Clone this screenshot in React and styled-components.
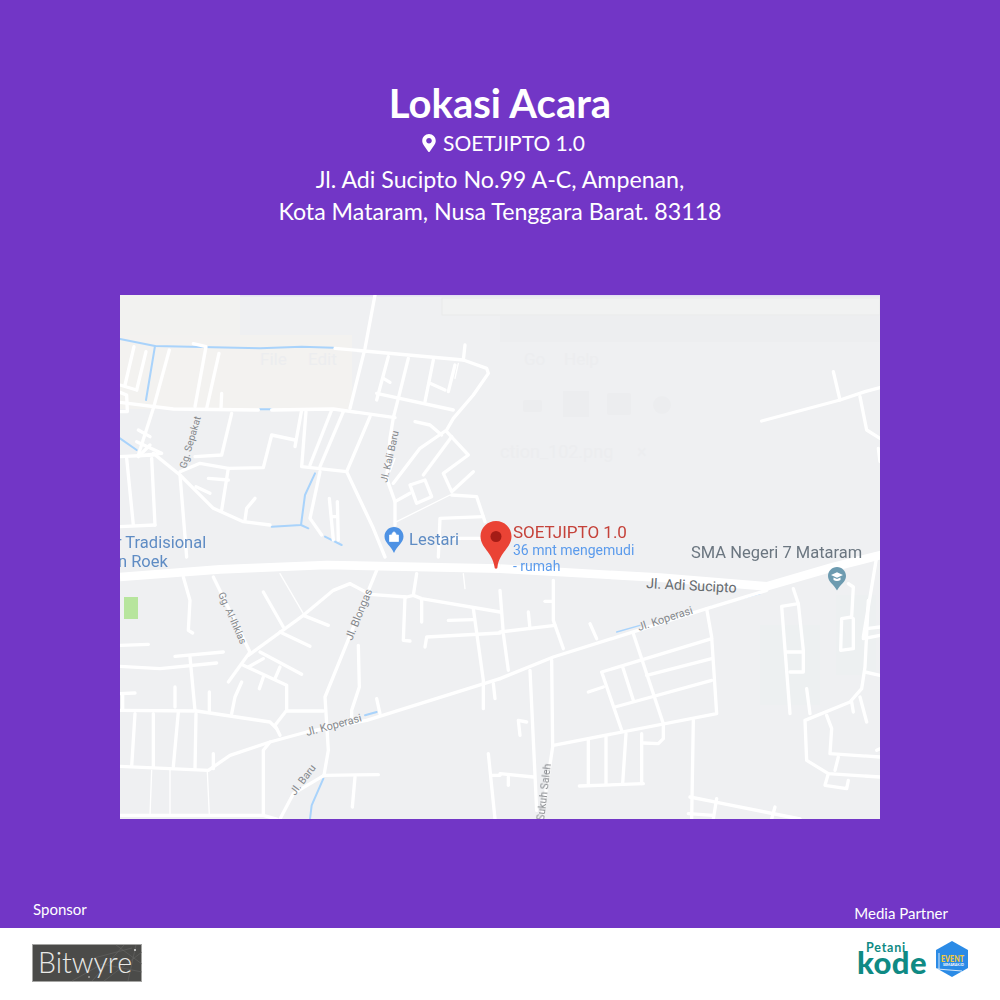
import React from 'react'
import styled, { createGlobalStyle } from 'styled-components'
import { FaMapMarkerAlt } from 'react-icons/fa'

const GlobalStyle = createGlobalStyle`
	* {
		box-sizing: border-box;
	}
	html, body {
		margin: 0;
		padding: 0;
		background: #7236c6;
	}
	body {
		font-family: Lato, "Open Sans", sans-serif;
	}
`

const Page = styled.div`
	width: 1000px;
	height: 1000px;
	background: #7236c6;
	color: #fff;
	display: flex;
	flex-direction: column;
	overflow: hidden;
`
const Hero = styled.header`
	padding-top: 80px;
	text-align: center;
`
const Title = styled.h1`
	margin: 0;
	font-size: 40px;
	line-height: 46px;
	font-weight: 700;
`
const Venue = styled.div`
	display: flex;
	justify-content: center;
	align-items: center;
	gap: 7px;
	margin-top: 3px;
	padding-left: 7px;
	font-size: 21px;
	line-height: 28px;
	svg {
		width: 14px;
		height: 18px;
	}
`
const Address = styled.p`
	margin: 6px 0 0;
	font-size: 23.2px;
	line-height: 32px;
`
const MapFrame = styled.div`
	width: 760px;
	height: 524px;
	margin: 68px auto 0;
	background: #eff0f2;
	overflow: hidden;
	svg {
		display: block;
	}
`
const FooterLabels = styled.div`
	display: flex;
	justify-content: space-between;
	align-items: flex-start;
	margin-top: auto;
	padding: 0 52px 0 33px;
	font-size: 15px;
	line-height: 18px;
	height: 28px;
`
const MediaLabel = styled.span`
	margin-top: 4px;
`
const SponsorBand = styled.footer`
	height: 72px;
	background: #fff;
	display: flex;
	justify-content: space-between;
	align-items: flex-start;
	padding: 16px 32px 0 32px;
`
const PartnerLogos = styled.div`
	display: flex;
	align-items: flex-start;
	gap: 7px;
	margin-top: -3px;
`

// traced from the map, in 3x crop coordinates per quadrant
const q1Roads = [
	'765,0 735,160 690,340', '645,160 1030,195 1100,220 1105,235 1060,300 1000,370 980,405 900,460 820,565',
	'1035,150 1030,195', '220,146 258,155 225,335', '297,175 260,340', '305,295 303,340',
	'0,322 160,342 415,345', '455,345 640,342 825,368', '148,165 100,340 55,480', '42,155 15,270', '78,170 50,285',
	'0,270 50,285', '0,292 20,300 22,350 0,350', '55,405 90,425', '335,355 305,480 225,485',
	'525,435 455,420 430,518 325,520 240,505 180,530', '545,345 525,455', '558,350 545,515 680,530',
	'635,345 570,510', '670,350 600,515', '750,365 680,530 760,700 795,786', '600,530 570,670 605,720',
	'50,440 125,475 60,482', '90,450 55,485', '0,485 100,480', '100,475 180,540 280,640 370,680 450,690',
	'180,540 200,786', '20,490 40,690', '95,490 105,690', '0,695 105,690', '325,520 305,645', '265,550 325,555',
	'228,575 270,595', '375,675 380,640 405,610', '628,610 640,735', '652,620 655,735', '635,665 650,665',
	'865,190 835,310 820,368 810,430 800,550 825,620 825,690', '805,185 770,315', '770,295 1000,345', '790,250 810,262',
	'940,195 915,320', '930,265 975,285', '1005,210 985,290', '885,380 930,390 965,420',
	'980,410 1045,480 970,535 995,590 1060,530', '995,425 910,540', '870,570 915,555 935,605 890,625 870,570',
	'825,620 870,595', '995,600 1070,605 1095,680', '1090,665 960,670 955,786', '960,730 1090,730'
]
const q1Thin = ['830,680 990,600', '810,530 825,490', '1005,250 1015,205']
const q1Water = [
	'0,132 105,153 420,160 545,155 640,158', '105,153 78,315', '420,343 455,343', '0,430 50,465',
	'585,535 555,600 543,690 455,695', '543,690 565,700', '615,725 665,750'
]
const q2Roads = ['785,378 1020,315 1095,290 1140,278', '1000,230 1020,315', '1080,305 1100,405 1140,430', '1135,460 1140,500']
const q3Roads = [
	'190,60 210,130 205,220 218,228', '280,60 390,285 325,375', '430,105 490,210',
	'690,80 640,100 550,175 385,295', '550,175 625,205', '480,225 570,268', '420,285 545,352',
	'370,325 500,385 500,460 465,505 480,535', '430,305 385,330', '480,330 465,365', '430,360 418,395',
	'365,375 345,420 335,470', '0,265 85,262', '165,298 310,285', '210,300 225,460', '0,328 120,335 290,318',
	'0,410 45,408', '8,410 8,455', '165,390 165,450', '268,405 268,465', '0,460 230,462 450,495 470,515',
	'500,462 610,462', '770,40 680,260 615,420 625,580 612,655', '612,655 775,653', '705,660 697,750',
	'612,655 520,710 480,786', '890,50 880,115 860,120 750,112 690,80', '880,115 905,125 1140,165',
	'855,120 850,250 870,252', '905,130 905,195', '985,190 1060,188', '1060,155 1090,370 1090,455',
	'915,270 920,240 1140,228', '715,265 718,390 695,460 695,490', '770,425 780,470', '1120,380 1125,425',
	'1140,365 740,490 560,525 450,555 430,580 430,775 470,786', '450,555 330,595 265,640 0,628', '280,590 280,635',
	'45,470 35,628', '100,470 100,628', '175,465 160,628', '228,470 225,635', '0,775 430,775', '1105,590 1125,786', '1115,655 1140,655'
]
const q3Thin = ['480,50 550,170', '95,640 90,775', '150,640 150,775', '262,645 268,775', '1030,50 1035,95']
const q3Water = ['610,665 575,745 570,786', '735,475 770,465']
const q4Roads = [
	'0,365 160,300 620,155 800,100', '0,100 10,230 25,340', '160,70 160,190 190,275', '135,133 160,133',
	'85,165 90,215', '0,225 165,205', '270,200 290,245', '400,230 490,500 490,545 475,560 430,558',
	'620,155 635,240 650,470 160,565', '635,245 305,345 365,520', '440,355 635,305', '345,450 635,370',
	'265,405 310,390', '368,330 400,430', '155,310 158,570 125,786', '90,340 110,760', '80,495 55,490 60,535',
	'0,650 100,660', '25,660 25,685', '265,545 265,685', '318,540 318,680', '378,530 368,680', '425,530 425,680',
	'238,687 430,680', '580,490 575,786', '570,720 900,786', '650,725 640,786', '825,750 815,786', '565,770 640,775',
	'880,95 895,140 845,148 870,470', '895,140 910,280 910,345 870,345', '860,285 905,285', '920,395 930,470',
	'1105,130 1095,330 1085,395 1050,435 915,490 920,610 985,650 1140,660', '980,475 995,515 990,590 1140,600',
	'1055,435 1060,465', '1080,420 1100,495', '1045,80 1060,90 1055,180 1025,185 1022,280 1060,275 1060,185',
	'1130,0 1090,240', '1090,245 1140,235', '1095,345 1140,355', '1100,215 1140,210',
	'985,650 975,685 1040,695 1045,670', '1015,600 1005,640', '1130,580 1140,575'
]
const q4Water = ['350,225 420,205', '630,150 780,110']

const Lines = ({ points, color = '#fff', width = 10 }) => (
	<g fill="none" stroke={color} strokeWidth={width} strokeLinejoin="round" strokeLinecap="round">
		{points.map((p, i) => <polyline key={i} points={p} />)}
	</g>
)

const Label = ({ x, y, size = 11, rotate = 0, fill = '#85888c', children }) => (
	<text
		x={x}
		y={y}
		fontSize={size}
		fontFamily="Roboto, sans-serif"
		fill={fill}
		transform={rotate ? `rotate(${rotate} ${x} ${y})` : undefined}
	>
		{children}
	</text>
)

const Ghost = ({ x, y, size = 17, children }) => (
	<text x={x} y={y} fontSize={size} fontFamily="Roboto, sans-serif" fill="#ecedef">{children}</text>
)

const MapDrawing = () => (
	<svg width="760" height="524" viewBox="0 0 760 524">
		<g style={{ filter: 'blur(0.55px)' }}>
			<rect width="760" height="524" fill="#eff0f2" />
			<rect width="760" height="1.5" fill="#e4dff2" />
			<rect x="0" y="0" width="120" height="40" fill="#f2f2f0" />
			<rect x="0" y="40" width="232" height="74" fill="#f3f2f0" />
			<rect x="322" y="3" width="438" height="17" fill="#f1f2f2" stroke="#e9eaea" />
			<rect x="380" y="21" width="380" height="26" fill="#edeef0" />
			<rect x="640" y="330" width="60" height="80" fill="#edf0f1" />
			<rect x="716" y="300" width="40" height="80" fill="#edf0f1" />
			<Ghost x={140} y={70}>File</Ghost>
			<Ghost x={188} y={70}>Edit</Ghost>
			<Ghost x={404} y={70}>Go</Ghost>
			<Ghost x={444} y={70}>Help</Ghost>
			<Ghost x={380} y={163} size={18}>ction_102.png</Ghost>
			<Ghost x={517} y={163} size={18}>×</Ghost>
			<rect x="403" y="105" width="19" height="12" rx="2" fill="#ecedef" />
			<rect x="443" y="96" width="26" height="26" fill="#ecedef" />
			<rect x="487" y="98" width="24" height="22" rx="2" fill="#ecedef" />
			<circle cx="542" cy="110" r="9" fill="#ecedef" />
			<rect x="4" y="302" width="14" height="22" fill="#b7e59d" />

			<g transform="scale(0.33333)">
				<Lines points={q1Water} color="#a9d3fb" width={6} />
				<Lines points={q1Thin} width={4} />
				<Lines points={q1Roads} />
			</g>
			<g transform="translate(380 0) scale(0.33333)">
				<Lines points={q2Roads} />
			</g>
			<g transform="translate(0 262) scale(0.33333)">
				<Lines points={q3Water} color="#a9d3fb" width={6} />
				<Lines points={q3Thin} width={4} />
				<Lines points={q3Roads} />
				<polyline points="0,60 300,37 620,24 1140,35" fill="none" stroke="#fff" strokeWidth="26" />
			</g>
			<g transform="translate(380 262) scale(0.33333)">
				<Lines points={q4Water} color="#a9d3fb" width={4} />
				<Lines points={q4Roads} />
				<polyline points="0,35 480,62 800,88 1000,30 1150,-8" fill="none" stroke="#fff" strokeWidth="26" strokeLinejoin="round" />
			</g>

			<Label x={66} y={174} size={10} rotate={-74}>Gg. Sepakat</Label>
			<Label x={267} y={188} size={10} rotate={-77}>Jl. Kali Baru</Label>
			<Label x={98} y={299} size={10} rotate={66}>Gg. Al-Ihklas</Label>
			<Label x={232} y={346} size={11} rotate={-68}>Jl. Blongas</Label>
			<Label x={187} y={441} size={11} rotate={-15}>Jl. Koperasi</Label>
			<Label x={519} y={336} size={11} rotate={-18}>Jl. Koperasi</Label>
			<Label x={175} y={501} size={10.5} rotate={-53}>Jl. Baru</Label>
			<Label x={424} y={526} size={10.5} rotate={-83}>Sukuh Saleh</Label>
			<Label x={526} y={293} size={14.2} rotate={3} fill="#666b6f">Jl. Adi Sucipto</Label>

			<Label x={-4} y={253} size={16.5} fill="#5f8cc4">r Tradisional</Label>
			<Label x={-2} y={272} size={16.5} fill="#5f8cc4">n Roek</Label>
			<Label x={289} y={250} size={16.5} fill="#5f8cc4">Lestari</Label>
			<Label x={571} y={263} size={16.5} fill="#6b7680">SMA Negeri 7 Mataram</Label>
			<Label x={393} y={243} size={17} fill="#c5423a">SOETJIPTO 1.0</Label>
			<Label x={393} y={260} size={14} fill="#5b9bec">36 mnt mengemudi</Label>
			<Label x={393} y={276} size={14} fill="#5b9bec">- rumah</Label>

			{/* poi markers */}
			<path d="M274 232c5.300 0 9.500 4.200 9.500 9.500 0 6.500-6.500 9-9.500 16.500-3-7.500-9.500-10-9.500-16.500 0-5.300 4.200-9.500 9.500-9.500z" fill="#4e92e4" />
			<path d="M269.500 240h9v6.500h-9zM272 240c0-4 4-4 4 0" fill="#fff" stroke="#fff" strokeWidth="0.7" />
			<path d="M717 272c5 0 9 4 9 9 0 6-6 8.500-9 14.500-3-6-9-8.500-9-14.500 0-5 4-9 9-9z" fill="#6d9bb0" />
			<path d="M711 280l6-2.800 6 2.800-6 2.800zM713.500 282.500v2.500c2 1.400 5 1.400 7 0v-2.500l-3.500 1.500z" fill="#fff" />
			<path d="M376 226c8.500 0 15.500 6.800 15.500 15.200 0 11.500-11.500 15.500-14 30.500 0 1-.500 2-1.500 2s-1.500-1-1.500-2c-2.500-15-14-19-14-30.500 0-8.400 7-15.200 15.500-15.200z" fill="#ea4335" />
			<circle cx="376" cy="241.500" r="5.500" fill="#a51c16" />
		</g>
	</svg>
)

const BitwyreLogo = () => (
	<svg width="110" height="38" viewBox="0 0 110 38">
		<rect x="0.500" y="0.500" width="109" height="37" fill="#4b4b49" stroke="#a5a5a3" />
		<g stroke="#666664" strokeWidth="0.6" fill="none">
			<path d="M60 37L92 1M72 37L110 8M84 1L110 20M96 37L104 1M40 37L70 20L110 28M62 14L100 4" />
		</g>
		<text x="6" y="29" fontSize="28.500" fontWeight="300" fontFamily="Lato, sans-serif" fill="#e9e9e7">Bitwyre</text>
		<circle cx="103" cy="6" r="1" fill="#ddd" />
		<circle cx="57" cy="33" r="0.800" fill="#ddd" />
	</svg>
)

const PetaniLogo = () => (
	<svg width="72" height="36" viewBox="0 0 72 36">
		<text x="9" y="10.500" fontSize="12.500" fontWeight="700" letterSpacing="0.8" fontFamily="Lato, sans-serif" fill="#0f8a84">Petani</text>
		<text x="0" y="33" fontSize="31" fontWeight="900" letterSpacing="0.4" fontFamily="Lato, sans-serif" fill="#0f8a84">kode</text>
	</svg>
)

const EventLogo = () => (
	<svg width="32" height="36" viewBox="0 0 32 36">
		<path d="M16 0L32 9V27L16 36L0 27V9Z" fill="#2b8be6" />
		<rect x="4.500" y="12" width="23" height="10" fill="#2b8be6" />
		<text x="5" y="20.500" fontSize="9.500" fontWeight="900" textLength="23" lengthAdjust="spacingAndGlyphs" fontFamily="Lato, sans-serif" fill="#f3c93c">EVENT</text>
		<text x="7" y="25" fontSize="3.500" fontWeight="700" textLength="21" fontFamily="Lato, sans-serif" fill="#fff">SEMARAK.ID</text>
		<path d="M1 28L26 30" stroke="#fff" strokeWidth="0.8" />
		<path d="M3 12V28" stroke="#fff" strokeWidth="0.8" />
	</svg>
)

const App = () => (
	<React.Fragment>
		<GlobalStyle />
		<Page>
			<Hero>
				<Title>Lokasi Acara</Title>
				<Venue>
					<FaMapMarkerAlt />
					<span>SOETJIPTO 1.0</span>
				</Venue>
				<Address>
					Jl. Adi Sucipto No.99 A-C, Ampenan,
					<br />
					Kota Mataram, Nusa Tenggara Barat. 83118
				</Address>
			</Hero>
			<MapFrame>
				<MapDrawing />
			</MapFrame>
			<FooterLabels>
				<span>Sponsor</span>
				<MediaLabel>Media Partner</MediaLabel>
			</FooterLabels>
			<SponsorBand>
				<BitwyreLogo />
				<PartnerLogos>
					<PetaniLogo />
					<EventLogo />
				</PartnerLogos>
			</SponsorBand>
		</Page>
	</React.Fragment>
)

export default App
